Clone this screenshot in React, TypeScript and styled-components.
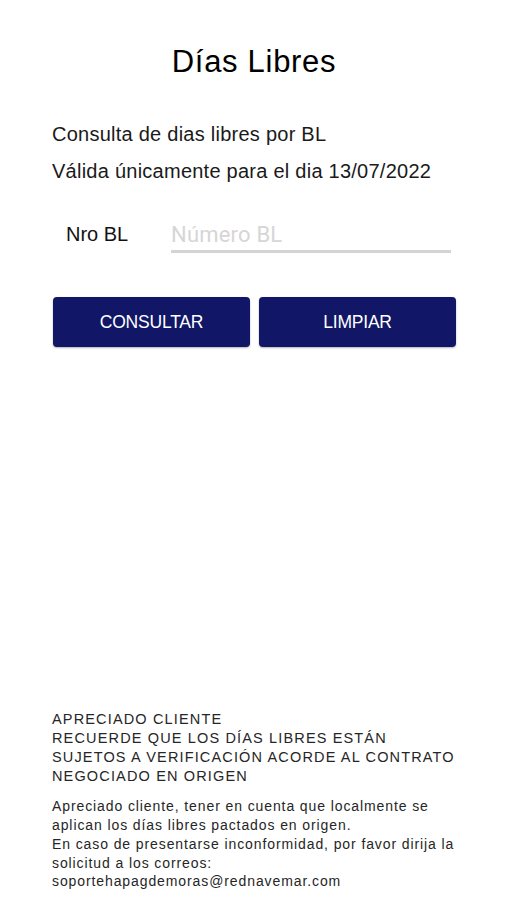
import React, {ReactElement, useState} from 'react';
import styled, {createGlobalStyle} from "styled-components";

const GlobalStyle = createGlobalStyle`
  html, body {
    margin: 0;
    padding: 0;
    background: #ffffff;
  }
  body {
    font-family: "Liberation Sans", Arial, sans-serif;
    color: #111111;
  }
`;

const Screen = styled.div`
  min-height: 900px;
  box-sizing: border-box;
  display: flex;
  flex-direction: column;
  padding: 44px 50px 9px 52px;
`;

const Title = styled.h1`
  margin: 0;
  text-align: center;
  font-size: 31px;
  font-weight: 400;
  letter-spacing: 0.7px;
  line-height: 36px;
  color: #000;
`;

const Info = styled.div`
  margin-top: 42px;
  display: flex;
  flex-direction: column;
  gap: 13px;
`;

const InfoLine = styled.p`
  margin: 0;
  font-size: 20px;
  letter-spacing: 0.25px;
  line-height: 24px;
  color: #1a1a1a;
`;

const FieldRow = styled.div`
  margin-top: 39px;
  display: flex;
  align-items: flex-start;
`;

const FieldLabel = styled.label`
  width: 119px;
  padding-left: 14px;
  box-sizing: border-box;
  font-size: 20px;
  line-height: 24px;
  color: #111;
`;

const Input = styled.input`
  width: 280px;
  box-sizing: border-box;
  border: none;
  border-bottom: 3px solid #d4d4d4;
  outline: none;
  font-family: Roboto, "Liberation Sans", Arial, sans-serif;
  font-size: 22px;
  line-height: 26px;
  letter-spacing: 0.2px;
  padding: 0 0 2px 0;
  margin: 0;
  color: #222;
  background: transparent;

  &::placeholder {
    color: #d6d6d6;
  }
`;

const Buttons = styled.div`
  margin-top: 44px;
  padding-left: 1px;
  display: grid;
  grid-template-columns: 197px 197px;
  gap: 9px;
`;

const Button = styled.button`
  height: 50px;
  border: none;
  border-radius: 4px;
  background: #111667;
  color: #ffffff;
  font-family: "Liberation Sans", Arial, sans-serif;
  font-size: 17.5px;
  letter-spacing: -0.2px;
  text-transform: uppercase;
  box-shadow: 0 1px 2px rgba(0, 0, 0, 0.3);
  cursor: pointer;
`;

const Footer = styled.footer`
  margin-top: auto;
  display: flex;
  flex-direction: column;
  gap: 12px;
  font-family: "Liberation Sans", Arial, sans-serif;
  color: #262626;
  white-space: nowrap;
`;

const Notice = styled.p`
  margin: 0;
  font-size: 14.5px;
  letter-spacing: 1.15px;
  line-height: 18.75px;
  text-transform: uppercase;
`;

const Note = styled.p`
  margin: 0;
  font-size: 14px;
  letter-spacing: 0.9px;
  line-height: 18.75px;
`;

export default function App(): ReactElement {
    const [bl, setBl] = useState("");

    return (
        <>
            <GlobalStyle/>
            <Screen>
                <Title>Días Libres</Title>
                <Info>
                    <InfoLine>Consulta de dias libres por BL</InfoLine>
                    <InfoLine>Válida únicamente para el dia 13/07/2022</InfoLine>
                </Info>
                <FieldRow>
                    <FieldLabel htmlFor="bl">Nro BL</FieldLabel>
                    <Input id="bl" placeholder="Número BL" value={bl}
                           onChange={(e) => setBl(e.target.value)}/>
                </FieldRow>
                <Buttons>
                    <Button>Consultar</Button>
                    <Button onClick={() => setBl("")}>Limpiar</Button>
                </Buttons>
                <Footer>
                    <Notice>
                        Apreciado cliente<br/>
                        Recuerde que los días libres están<br/>
                        sujetos a verificación acorde al contrato<br/>
                        negociado en origen
                    </Notice>
                    <Note>
                        Apreciado cliente, tener en cuenta que localmente se<br/>
                        aplican los días libres pactados en origen.<br/>
                        En caso de presentarse inconformidad, por favor dirija la<br/>
                        solicitud a los correos:<br/>
                        soportehapagdemoras@rednavemar.com
                    </Note>
                </Footer>
            </Screen>
        </>
    );
}
